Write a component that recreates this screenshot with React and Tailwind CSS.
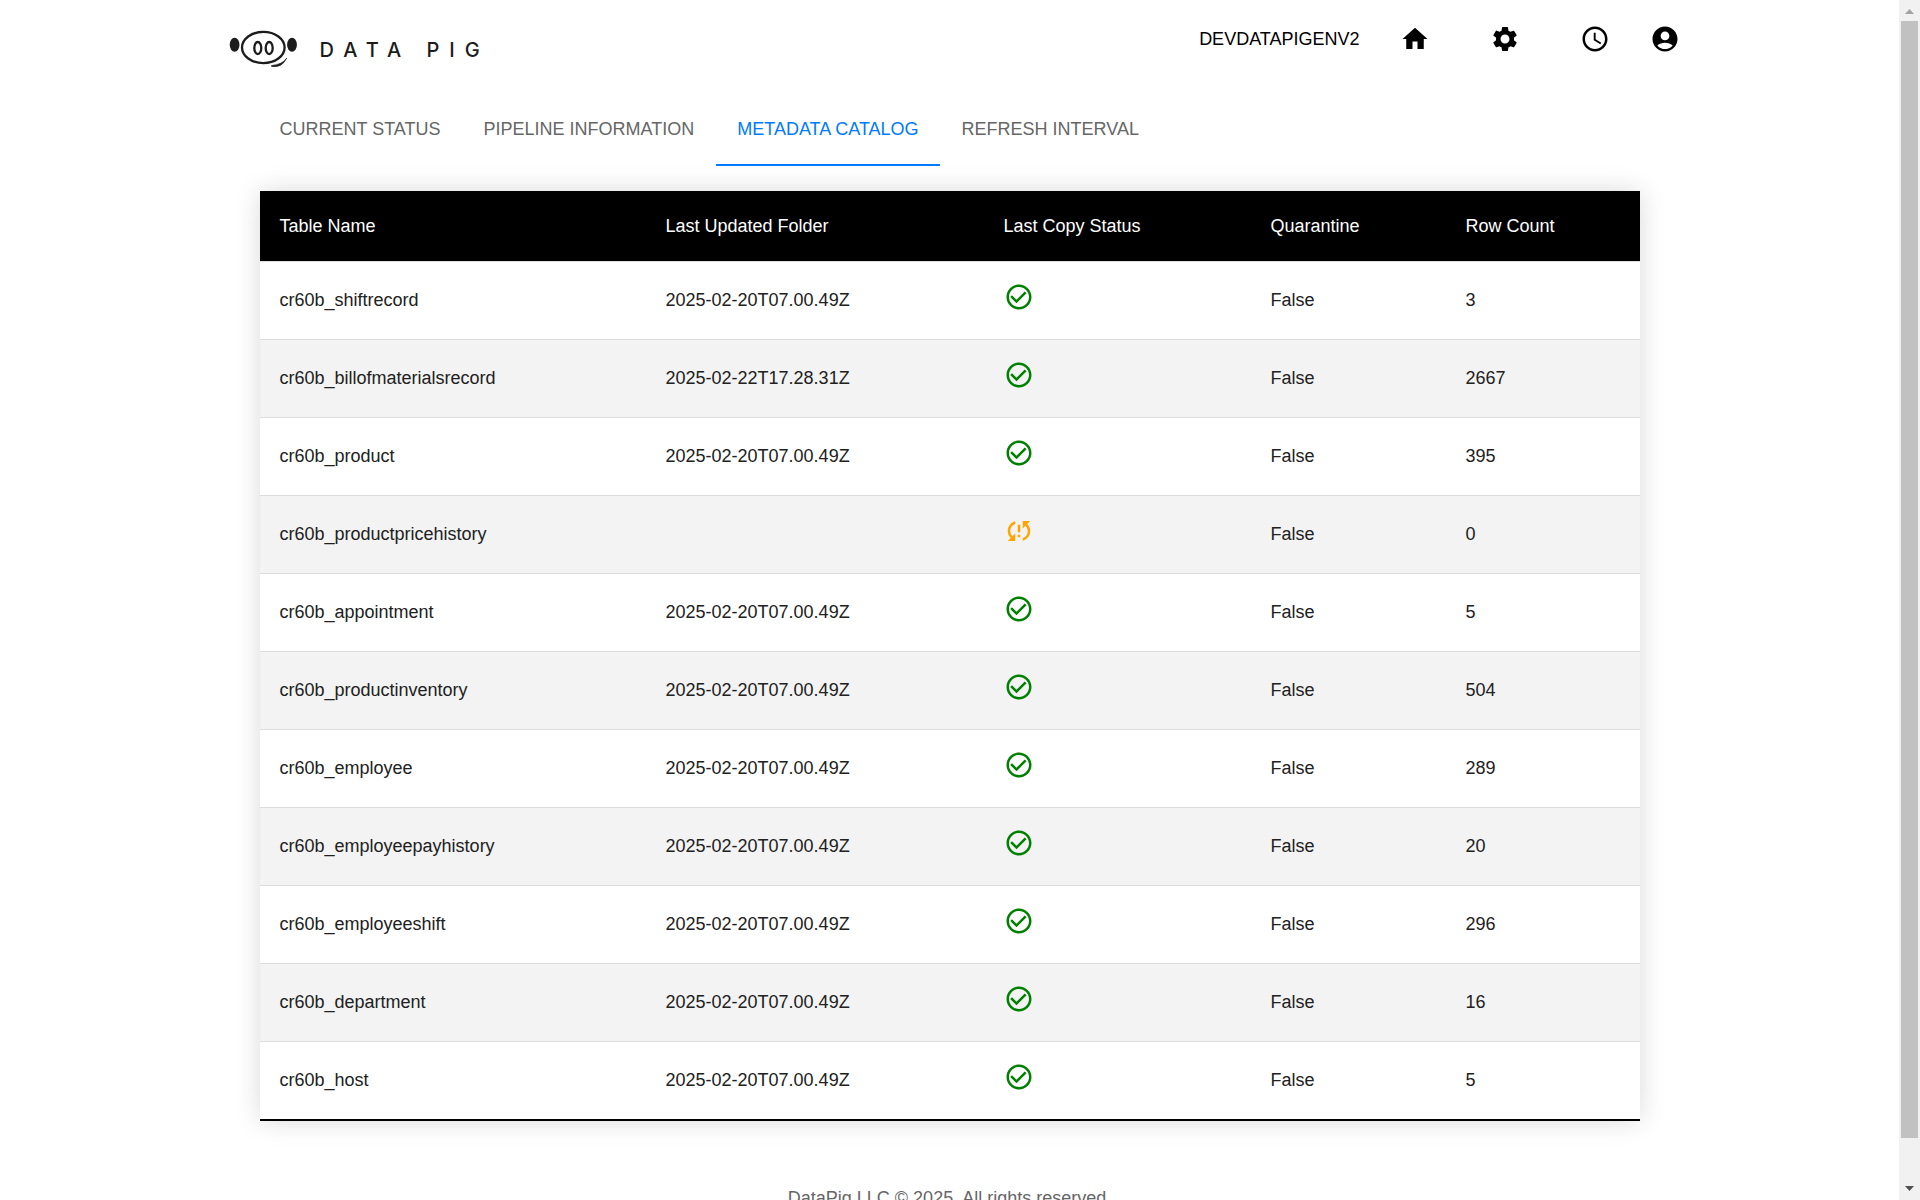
import React from "react";
import { MdAccessTime, MdCheckCircleOutline, MdHome, MdSettings, MdSyncProblem } from "react-icons/md";

const tabs = ["Current Status", "Pipeline Information", "Metadata Catalog", "Refresh Interval"];

const columns = [
  { label: "Table Name", width: "w-[386px]" },
  { label: "Last Updated Folder", width: "w-[338px]" },
  { label: "Last Copy Status", width: "w-[267px]" },
  { label: "Quarantine", width: "w-[195px]" },
  { label: "Row Count", width: "w-[194px]" },
];

const rows = [
  { name: "cr60b_shiftrecord", folder: "2025-02-20T07.00.49Z", ok: true, count: 3 },
  { name: "cr60b_billofmaterialsrecord", folder: "2025-02-22T17.28.31Z", ok: true, count: 2667 },
  { name: "cr60b_product", folder: "2025-02-20T07.00.49Z", ok: true, count: 395 },
  { name: "cr60b_productpricehistory", folder: "", ok: false, count: 0 },
  { name: "cr60b_appointment", folder: "2025-02-20T07.00.49Z", ok: true, count: 5 },
  { name: "cr60b_productinventory", folder: "2025-02-20T07.00.49Z", ok: true, count: 504 },
  { name: "cr60b_employee", folder: "2025-02-20T07.00.49Z", ok: true, count: 289 },
  { name: "cr60b_employeepayhistory", folder: "2025-02-20T07.00.49Z", ok: true, count: 20 },
  { name: "cr60b_employeeshift", folder: "2025-02-20T07.00.49Z", ok: true, count: 296 },
  { name: "cr60b_department", folder: "2025-02-20T07.00.49Z", ok: true, count: 16 },
  { name: "cr60b_host", folder: "2025-02-20T07.00.49Z", ok: true, count: 5 },
];

function PigLogo() {
  return (
    <svg width="72" height="40" viewBox="0 0 72 40" fill="none" stroke="#1c1c1c" strokeWidth="2" aria-hidden="true">
      <ellipse cx="6.6" cy="16.7" rx="4.9" ry="7" fill="#1c1c1c" stroke="none" />
      <ellipse cx="64" cy="16.7" rx="4.9" ry="7" fill="#1c1c1c" stroke="none" />
      <ellipse cx="35.3" cy="19.5" rx="21.3" ry="15.6" strokeWidth="2.3" />
      <ellipse cx="29.8" cy="20" rx="3.5" ry="6" strokeWidth="2.3" />
      <ellipse cx="41.2" cy="20" rx="3.5" ry="6" strokeWidth="2.3" />
      <path d="M43.5 37.5 Q54.5 36.5 58.8 30 Q54 40.2 43.5 38.4 Z" fill="#1c1c1c" strokeWidth="0.6" />
    </svg>
  );
}

function AccountIcon() {
  return (
    <svg width="30" height="30" viewBox="0 0 24 24" fill="currentColor" aria-hidden="true">
      <path d="M12 2C6.48 2 2 6.48 2 12s4.48 10 10 10 10-4.48 10-10S17.52 2 12 2m0 4c1.93 0 3.5 1.57 3.5 3.5S13.93 13 12 13s-3.5-1.57-3.5-3.5S10.07 6 12 6m0 14c-2.03 0-4.43-.82-6.14-2.88C7.55 15.8 9.68 15 12 15s4.45.8 6.14 2.12C16.43 19.18 14.03 20 12 20" />
    </svg>
  );
}

function Header() {
  return (
    <header className="flex items-start justify-between pl-7 pr-5">
      <a href="#home" className="mt-7 flex items-center" aria-label="Data Pig">
        <PigLogo />
        <span className="ml-5 mt-1 font-['Inter',sans-serif] text-[20px] leading-[24px] font-medium tracking-[10px] whitespace-pre text-[#1c1c1c]">
          DATA PIG
        </span>
      </a>
      <nav className="mt-6 flex items-center text-black">
        <span className="mr-10">DEVDATAPIGENV2</span>
        <div className="flex items-center gap-[60px]">
          <button type="button" aria-label="Home"><MdHome size={30} /></button>
          <button type="button" aria-label="Settings"><MdSettings size={30} /></button>
          <button type="button" aria-label="History"><MdAccessTime size={30} /></button>
        </div>
        <button type="button" aria-label="Account" className="ml-10"><AccountIcon /></button>
      </nav>
    </header>
  );
}

function Tabs() {
  return (
    <div role="tablist" className="mt-6 flex gap-px px-[59px]">
      {tabs.map((tab) => {
        const active = tab === "Metadata Catalog";
        return (
          <button
            key={tab}
            type="button"
            role="tab"
            aria-selected={active}
            className={
              active
                ? "h-[74px] border-b-2 border-[#007bff] px-[21px] pt-0.5 text-[#007bff] uppercase"
                : "h-[74px] border-b-2 border-transparent px-[21px] pt-0.5 text-[#666666] uppercase"
            }
          >
            {tab}
          </button>
        );
      })}
    </div>
  );
}

function CatalogTable() {
  return (
    <div className="mt-[25px] px-[60px]">
      <table className="w-full table-fixed border-separate border-spacing-0 text-left text-[#212121] shadow-[0_0_25px_rgba(0,0,0,0.15)]">
        <thead>
          <tr className="h-[71px] bg-black text-white">
            {columns.map((c) => (
              <th key={c.label} scope="col" className={`${c.width} border-b border-[#dddddd] px-5 font-normal`}>
                {c.label}
              </th>
            ))}
          </tr>
        </thead>
        <tbody>
          {rows.map((r) => (
            <tr
              key={r.name}
              className="h-[78px] bg-white even:bg-[#f3f3f3] last:h-[79px] *:border-b *:border-[#dddddd] *:px-5 *:pb-0.5 last:*:border-b-2 last:*:border-black"
            >
              <td>{r.name}</td>
              <td>{r.folder}</td>
              <td>
                <span className="mb-1.5 block">
                  {r.ok ? (
                    <MdCheckCircleOutline size={30} color="#008000" title="Succeeded" />
                  ) : (
                    <MdSyncProblem size={30} color="#ffa500" title="Sync problem" />
                  )}
                </span>
              </td>
              <td>False</td>
              <td>{r.count}</td>
            </tr>
          ))}
        </tbody>
      </table>
    </div>
  );
}

function Scrollbar() {
  return (
    <div className="flex w-[21px] shrink-0 flex-col items-center bg-[#f1f1f1]" aria-hidden="true">
      <svg className="shrink-0" width="21" height="21" viewBox="0 0 21 21">
        <path d="M6 14 L10.5 9 L15 14 Z" fill="#a3a3a3" />
      </svg>
      <div className="w-[17px] grow bg-[#c1c1c1]" />
      <div className="h-[41px] shrink-0" />
      <svg className="shrink-0" width="21" height="21" viewBox="0 0 21 21">
        <path d="M6 7 L10.5 12 L15 7 Z" fill="#505050" />
      </svg>
    </div>
  );
}

export default function App() {
  return (
    <div className="flex h-screen bg-white font-['Liberation_Sans',Arial,sans-serif] text-[18px] leading-[26px]">
      <div className="min-w-0 flex-1 overflow-hidden">
        <div className="mx-auto max-w-[1500px]">
          <Header />
          <Tabs />
          <CatalogTable />
          <footer className="mt-16 pb-6 text-center text-[#666666]">DataPig LLC © 2025. All rights reserved.</footer>
        </div>
      </div>
      <Scrollbar />
    </div>
  );
}
